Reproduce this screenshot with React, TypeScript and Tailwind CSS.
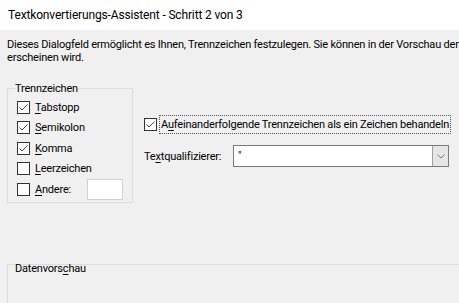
import React from "react";

const font = { fontFamily: 'Roboto, "Noto Sans", sans-serif' };

function Check({ checked }: { checked: boolean }) {
  return (
    <span className="inline-flex w-[13px] h-[13px] border border-[#333333] bg-white shrink-0 items-center justify-center">
      {checked && (
        <svg width="11" height="11" viewBox="0 0 11 11">
          <polyline points="1.5,5.5 4,8 9.5,2.5" fill="none" stroke="#444" strokeWidth="1" />
        </svg>
      )}
    </span>
  );
}

function Row({ checked, first, rest, extra }: { checked: boolean; first: string; rest: string; extra?: React.ReactNode }) {
  return (
    <div className="flex items-center h-[20.5px]">
      <Check checked={checked} />
      <span className="ml-[5px]">
        <span className="underline underline-offset-2">{first}</span>
        {rest}
      </span>
      {extra}
    </div>
  );
}

export default function App() {
  return (
    <div className="w-[459px] h-[303px] overflow-hidden text-[#000] bg-[#f0f0f0]" style={font}>
      <div className="h-[30px] bg-white flex items-center pl-[8px] text-[12px] tracking-[-0.15px]">
        Textkonvertierungs-Assistent - Schritt 2 von 3
      </div>
      <div className="text-[11px] leading-[13px] whitespace-nowrap tracking-[-0.2px]">
        <p className="pl-[7px] pt-[8px]">
          Dieses Dialogfeld ermöglicht es Ihnen, Trennzeichen festzulegen. Sie können in der Vorschau der
          <br />
          erscheinen wird.
        </p>
        <div className="flex mt-[18px]">
          <fieldset className="shrink-0 ml-[7px] w-[126px] h-[121px] border border-[#dcdcdc] px-[9px] pt-[2px]">
            <legend className="px-[0px] ml-[-2px] leading-[13px]">Trennzeichen</legend>
            <Row checked first="T" rest="abstopp" />
            <Row checked first="S" rest="emikolon" />
            <Row checked first="K" rest="omma" />
            <Row checked={false} first="L" rest="eerzeichen" />
            <Row
              checked={false}
              first="A"
              rest="ndere:"
              extra={<span className="ml-auto w-[36px] h-[21px] bg-white border border-[#d0d0d0]" />}
            />
          </fieldset>
          <div className="ml-[11px] flex flex-col pt-[33px]">
            <div className="flex items-center">
              <Check checked />
              <span className="ml-[2px] border border-dotted border-[#555] px-[1px] h-[19px] flex items-center">
                A<span className="underline underline-offset-2">u</span>feinanderfolgende Trennzeichen als ein Zeichen behandeln
              </span>
            </div>
            <div className="flex items-center mt-[11px]">
              <span className="w-[89px]">
                Te<span className="underline underline-offset-2">x</span>tqualifizierer:
              </span>
              <div className="w-[216px] h-[22px] bg-white border border-[#7a7a7a] flex">
                <span className="flex-1 pl-[4px] leading-[20px]">"</span>
                <span className="w-[16px] bg-[#e6e6e6] border-l border-[#a0a0a0] flex items-center justify-center">
                  <svg width="8" height="5" viewBox="0 0 8 5">
                    <polyline points="0.5,0.5 4,4 7.5,0.5" fill="none" stroke="#777" strokeWidth="1" />
                  </svg>
                </span>
              </div>
            </div>
          </div>
        </div>
        <div className="mt-[61px] ml-[7px] w-[470px] h-[60px] border border-[#dcdcdc] px-[7px]">
          <span className="block -mt-[3px]">
            Datenvors<span className="underline underline-offset-2">c</span>hau
          </span>
        </div>
      </div>
    </div>
  );
}
